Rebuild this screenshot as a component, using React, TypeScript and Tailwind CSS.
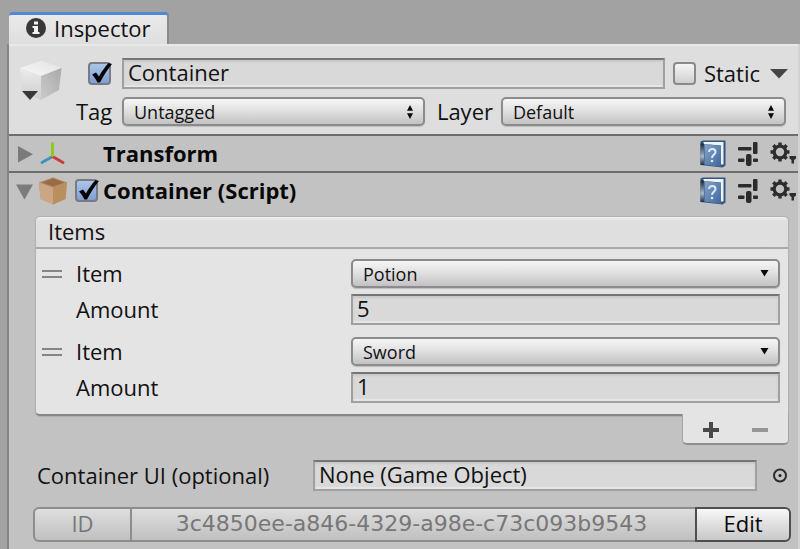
import type { ReactNode } from "react";

const fieldClass =
  "block h-[31px] w-full min-w-0 border-2 border-[#a0a0a0] border-t-[#757575] bg-[#d9d9d9] px-1 pb-[3px] text-[22px] leading-6 text-[#111] outline-none shadow-[inset_0_2px_2px_#c9c9c9,inset_0_-2px_1px_#e6e6e6]";

function Check({ id, label, checked }: { id?: string; label?: string; checked?: boolean }) {
  return (
    <span className="relative block h-[23px] w-[23px] shrink-0">
      <input
        id={id}
        type="checkbox"
        aria-label={label}
        defaultChecked={checked}
        className="peer block h-[23px] w-[23px] appearance-none rounded-[4px] border-2 border-[#8a8a8a] bg-linear-to-b from-[#f6f6f6] to-[#d0cfd0] checked:border-[#777b84] checked:from-[#adc5e6] checked:to-[#7f9fd3]"
      />
      <svg
        viewBox="0 0 26 24"
        className="pointer-events-none absolute top-0 left-0 hidden h-6 w-[26px] peer-checked:block"
      >
        <path
          d="M4 12.500 8 10.500 11 14.500C13.500 9.500 17 5 20.500 1L24 2C19.500 7.500 15.500 13.500 12 20.500H9.500C8 17.500 6.200 14.800 4 12.500Z"
          fill="#050505"
        />
      </svg>
    </span>
  );
}

function Popup({
  id,
  options,
  double,
}: {
  id: string;
  options: string[];
  double?: boolean;
}) {
  return (
    <div className="relative min-w-0">
      <select
        id={id}
        className="block h-[29px] w-full appearance-none rounded-[5px] border-2 border-[#8b8b8b] bg-linear-to-b from-[#f6f6f6] via-[#e0dfe0] to-[#c3c1c3] px-[10px] text-[18px] leading-6 text-[#111] shadow-[0_1px_1px_#bdbdbd] outline-none"
      >
        {options.map((o) => (
          <option key={o}>{o}</option>
        ))}
      </select>
      <svg
        viewBox="0 0 10 14"
        className="pointer-events-none absolute top-2 right-[10px] h-[14px] w-[10px]"
        fill="#0a0a0a"
      >
        {double ? (
          <path d="M5 0 8 5.800H2ZM5 14 8 8.200H2Z" />
        ) : (
          <path d="M.5 3H8.500L4.500 9.500Z" />
        )}
      </svg>
    </div>
  );
}

function CubeIcon() {
  return (
    <svg viewBox="0 0 42 42" className="h-[42px] w-[42px]">
      <defs>
        <linearGradient id="cubeTop" x1="0" y1="1" x2="1" y2="0">
          <stop offset="0" stopColor="#f8f8f8" />
          <stop offset="1" stopColor="#e2e2e2" />
        </linearGradient>
        <linearGradient id="cubeLeft" x1="0" y1="0" x2="0" y2="1">
          <stop offset="0" stopColor="#ececec" />
          <stop offset="1" stopColor="#cdcdcd" />
        </linearGradient>
        <linearGradient id="cubeRight" x1="1" y1="0" x2="0" y2="1">
          <stop offset="0" stopColor="#a9a9a9" />
          <stop offset="1" stopColor="#cbcbcb" />
        </linearGradient>
      </defs>
      <path d="M0 8 21.500 .5 41.500 8 21 16Z" fill="url(#cubeTop)" />
      <path d="M0 8 21 16V40L3 31.500Z" fill="url(#cubeLeft)" />
      <path d="M41.500 8 21 16V40L39 30Z" fill="url(#cubeRight)" />
      <path d="M2 31H18L10 40Z" fill="#383838" />
    </svg>
  );
}

function TransformIcon() {
  return (
    <svg viewBox="0 0 28 28" className="h-7 w-7" fill="none" strokeWidth="3" strokeLinecap="round">
      <path d="M13.500 16.500 3 22.500" stroke="#4193bd" />
      <path d="M13.500 16.500 24 22.500" stroke="#cc3a3a" />
      <path d="M13.500 15.500V3.500" stroke="#8fc919" />
    </svg>
  );
}

function BoxIcon() {
  return (
    <svg viewBox="0 0 28 28" className="h-7 w-7">
      <path d="M0 5.500 14 .5 28 5.500 26.500 22 14 27.500 1.500 22Z" fill="#c49a70" />
      <path d="M0 5.500 14 .5 28 5.500 14 11Z" fill="#b38a62" />
      <path d="M3 5.500 14 1.500 25 5.500 14 9.500Z" fill="#966d48" />
      <path d="M0 5.500 14 10.500V27.500L1.500 22Z" fill="#cba684" />
      <path d="M28 5.500 14 10.500V27.500L26.500 22Z" fill="#b98f60" />
    </svg>
  );
}

function BookIcon() {
  return (
    <svg viewBox="0 0 26 28" className="h-7 w-[26px]">
      <defs>
        <linearGradient id="cover" x1="0" y1="0" x2="1" y2="1">
          <stop offset="0" stopColor="#86a5c8" />
          <stop offset="1" stopColor="#3f659b" />
        </linearGradient>
        <linearGradient id="spine" x1="0" y1="0" x2="0" y2="1">
          <stop offset="0" stopColor="#16273d" />
          <stop offset=".6" stopColor="#a5b8cc" />
          <stop offset="1" stopColor="#1d2f4a" />
        </linearGradient>
      </defs>
      <path d="M.5 1.500 3 .5H25.500V25.500L22.500 27.500 .5 25Z" fill="#33557f" />
      <path d="M3.500 2H23.500V24.500H21V5.500L3.500 4Z" fill="#eef3f8" />
      <path d="M.5 3.500H4V25H.5Z" fill="url(#spine)" />
      <path d="M4.500 4 21 6V27L4.500 24.500Z" fill="url(#cover)" />
      <path
        d="M9 12C9 7.800 15.500 8.300 15.500 12 15.500 14.800 12 14.500 12 18"
        fill="none"
        stroke="#dce9f8"
        strokeWidth="2"
      />
      <circle cx="12" cy="21" r="1.300" fill="#dce9f8" />
    </svg>
  );
}

function PresetIcon() {
  return (
    <svg viewBox="0 0 20 24" className="h-6 w-5" fill="#2b2b2b">
      <rect x="0" y="5" width="13.500" height="3.500" rx="1" />
      <rect x="15" y="0" width="4.500" height="12" rx="1" />
      <rect x="0" y="16.500" width="6.500" height="3.500" rx="1" />
      <rect x="8" y="12" width="5.500" height="12" rx="2" />
      <rect x="15" y="16.500" width="5" height="3.500" rx="1" />
    </svg>
  );
}

function GearIcon() {
  return (
    <svg viewBox="0 0 26 24" className="h-6 w-[26px]">
      <circle cx="10" cy="10" r="5.800" fill="none" stroke="#2d2d2d" strokeWidth="3.200" />
      <g stroke="#2d2d2d" strokeWidth="3.400">
        <path d="M10 .5V4M10 16V19.500M.5 10H4M16 10H19.500M3.300 3.300 5.800 5.800M14.200 14.200 16.700 16.700M16.700 3.300 14.200 5.800M5.800 14.200 3.300 16.700" />
      </g>
      <path d="M19.500 14H26V16.500L24 18V21.500H21.500V18L19.500 16.500Z" fill="#2d2d2d" />
    </svg>
  );
}

function ComponentHeader({
  name,
  open,
  icon,
  toggle,
}: {
  name: string;
  open?: boolean;
  icon: ReactNode;
  toggle?: ReactNode;
}) {
  return (
    <div className="flex h-[37px] items-center border-t-2 border-[#6d6d6d] pr-[2px] pl-[6px]">
      <button aria-label={"Toggle " + name} aria-expanded={!!open} className="w-5 shrink-0">
        <svg viewBox="0 0 20 20" className="h-5 w-5" fill="#7b7b7b">
          {open ? <path d="M1 3.500H18L9.500 18.500Z" /> : <path d="M3 2V18.500L18 10.300Z" />}
        </svg>
      </button>
      <span className="ml-1 w-[30px] shrink-0">{icon}</span>
      <span className="ml-[6px] w-[23px] shrink-0">{toggle}</span>
      <h2 className="ml-[5px] flex-1 pb-[2px] text-[22px] leading-7 font-bold whitespace-nowrap text-[#080808]">
        {name}
      </h2>
      <div className="flex shrink-0 items-center">
        <button aria-label={name + " help"}>
          <BookIcon />
        </button>
        <button aria-label={name + " presets"} className="ml-3">
          <PresetIcon />
        </button>
        <button aria-label={name + " settings"} className="ml-3">
          <GearIcon />
        </button>
      </div>
    </div>
  );
}

function ItemRow({ index, item, amount }: { index: number; item: string; amount: string }) {
  const itemId = "item-" + index;
  const amountId = "amount-" + index;
  return (
    <li className="grid grid-cols-[34px_275px_1fr] items-center gap-y-[6px]">
      <span className="flex flex-col gap-1">
        <span className="h-[2px] w-5 bg-[#858585]" />
        <span className="h-[2px] w-5 bg-[#858585]" />
      </span>
      <label htmlFor={itemId} className="pb-[2px] leading-6">
        Item
      </label>
      <Popup id={itemId} options={[item]} />
      <label htmlFor={amountId} className="col-start-2 pb-[2px] leading-6">
        Amount
      </label>
      <input id={amountId} defaultValue={amount} className={fieldClass} />
    </li>
  );
}

export default function App() {
  return (
    <div className="min-h-screen bg-[#a2a2a2] pt-3 pl-[7px] font-['Open_Sans','Noto_Sans',sans-serif] text-[22px] leading-7 text-[#111]">
      <div role="tablist" className="flex">
        <button
          role="tab"
          aria-selected="true"
          className="ml-[2px] flex h-8 items-center rounded-t-[4px] border-t-[3px] border-r-2 border-t-[#5087d6] border-r-[#8b8b8b] bg-linear-to-b from-[#eaeaea] to-[#dedede] pr-4 pb-[3px] pl-[17px]"
        >
          <svg viewBox="0 0 20 20" className="mr-2 h-5 w-5">
            <circle cx="10" cy="10" r="10" fill="#383838" />
            <path d="M8 3.500H12V6.500H8ZM6.500 8H12V14H13.500V16H6.500V14H8V10H6.500Z" fill="#f2f2f2" />
          </svg>
          Inspector
        </button>
      </div>

      <main className="flex min-h-[calc(100vh-44px)] flex-col border-x-2 border-r-[#d2d2d2] border-l-[#858585] bg-[#c2c2c2]">
        <header className="flex h-[90px] items-start border-t-2 border-[#e8e8e8] bg-[#dedede] pt-3 pr-[10px] pl-[11px]">
          <button aria-label="Select icon" className="mt-[2px] shrink-0">
            <CubeIcon />
          </button>
          <div className="ml-[14px] flex min-w-0 flex-1 flex-col gap-2">
            <div className="flex h-[31px] items-center">
              <span className="ml-3 shrink-0">
                <Check label="Active" checked />
              </span>
              <input aria-label="Name" defaultValue="Container" className={fieldClass + " ml-[11px] flex-1"} />
              <div className="ml-2 flex shrink-0 items-center gap-2">
                <Check id="static" />
                <label htmlFor="static" className="pb-[2px]">
                  Static
                </label>
              </div>
              <button aria-label="Static options" className="ml-[10px]">
                <svg viewBox="0 0 18 10" className="h-[10px] w-[18px]">
                  <path d="M0 0H18L9 9.500Z" fill="#454545" />
                </svg>
              </button>
            </div>
            <div className="flex h-[29px] items-center pr-[2px]">
              <label htmlFor="tag" className="w-[46px] shrink-0 pb-[2px]">
                Tag
              </label>
              <div className="min-w-0 flex-[17]">
                <Popup id="tag" options={["Untagged"]} double />
              </div>
              <label htmlFor="layer" className="ml-3 w-16 shrink-0 pb-[2px]">
                Layer
              </label>
              <div className="min-w-0 flex-[16]">
                <Popup id="layer" options={["Default"]} double />
              </div>
            </div>
          </div>
        </header>

        <ComponentHeader name="Transform" icon={<TransformIcon />} />
        <ComponentHeader
          name="Container (Script)"
          open
          icon={<BoxIcon />}
          toggle={<Check label="Container enabled" checked />}
        />

        <section className="mt-2 pr-[9px] pl-[26px]">
          <div className="rounded-[5px] rounded-br-none border border-b-2 border-[#b0b0b0] border-b-[#878787] bg-[#e4e4e4] shadow-[0_1px_1px_#adadad]">
            <h3 className="h-8 rounded-t-[5px] border-b-2 border-[#a9a9a9] bg-linear-to-b from-[#f0f0f0] from-0% to-[#dfdfdf] to-15% pl-3 leading-7">
              Items
            </h3>
            <ul className="flex flex-col gap-3 pt-[10px] pr-2 pb-[11px] pl-[6px]">
              <ItemRow index={0} item="Potion" amount="5" />
              <ItemRow index={1} item="Sword" amount="1" />
            </ul>
          </div>
          <div className="relative -mt-[2px] ml-auto flex h-[31px] w-[107px] rounded-b-[5px] border-x border-b-2 border-[#a5a5a5] border-b-[#8e8e8e] bg-[#e4e4e4] px-1 pt-[2px]">
            <button aria-label="Add item" className="flex flex-1 items-center justify-center">
              <svg viewBox="0 0 16 16" className="h-4 w-4">
                <path d="M0 8H16M8 0V16" stroke="#484848" strokeWidth="4" />
              </svg>
            </button>
            <button aria-label="Remove item" className="flex flex-1 items-center justify-center">
              <svg viewBox="0 0 16 16" className="h-4 w-4">
                <path d="M0 8H16" stroke="#969696" strokeWidth="4" />
              </svg>
            </button>
          </div>
        </section>

        <div className="mt-[15px] flex items-center pr-[10px] pl-7">
          <label htmlFor="container-ui" className="w-[276px] shrink-0 pb-[2px] whitespace-nowrap">
            Container UI (optional)
          </label>
          <input id="container-ui" readOnly value="None (Game Object)" className={fieldClass + " flex-1"} />
          <button aria-label="Pick object" className="ml-[15px] shrink-0">
            <svg viewBox="0 0 16 16" className="h-4 w-4">
              <circle cx="8" cy="7.500" r="6" fill="none" stroke="#2b2b2b" strokeWidth="2" />
              <circle cx="8" cy="7.500" r="1.500" fill="#1b1b1b" />
            </svg>
          </button>
        </div>

        <div className="mt-4 mr-[7px] mb-[6px] ml-6 flex h-[35px] text-center leading-7">
          <label
            htmlFor="guid"
            className="w-[97px] shrink-0 rounded-l-[6px] border-2 border-r-0 border-[#8d8d8d] bg-linear-to-b from-[#dedede] to-[#c0c0c0] text-[#777]"
          >
            ID
          </label>
          <input
            id="guid"
            disabled
            value="3c4850ee-a846-4329-a98e-c73c093b9543"
            className="min-w-0 flex-1 border-2 border-r-0 border-[#8d8d8d] bg-linear-to-b from-[#dedede] to-[#c0c0c0] pr-1 pb-[2px] text-center font-['DejaVu_Sans',sans-serif] text-[22px] text-[#777]"
          />
          <button className="w-24 shrink-0 rounded-r-[6px] border-2 border-[#4f4f4f] bg-linear-to-b from-[#f8f8f8] to-[#c9c8c9] pb-[3px] text-[#080808]">
            Edit
          </button>
        </div>
      </main>
    </div>
  );
}
